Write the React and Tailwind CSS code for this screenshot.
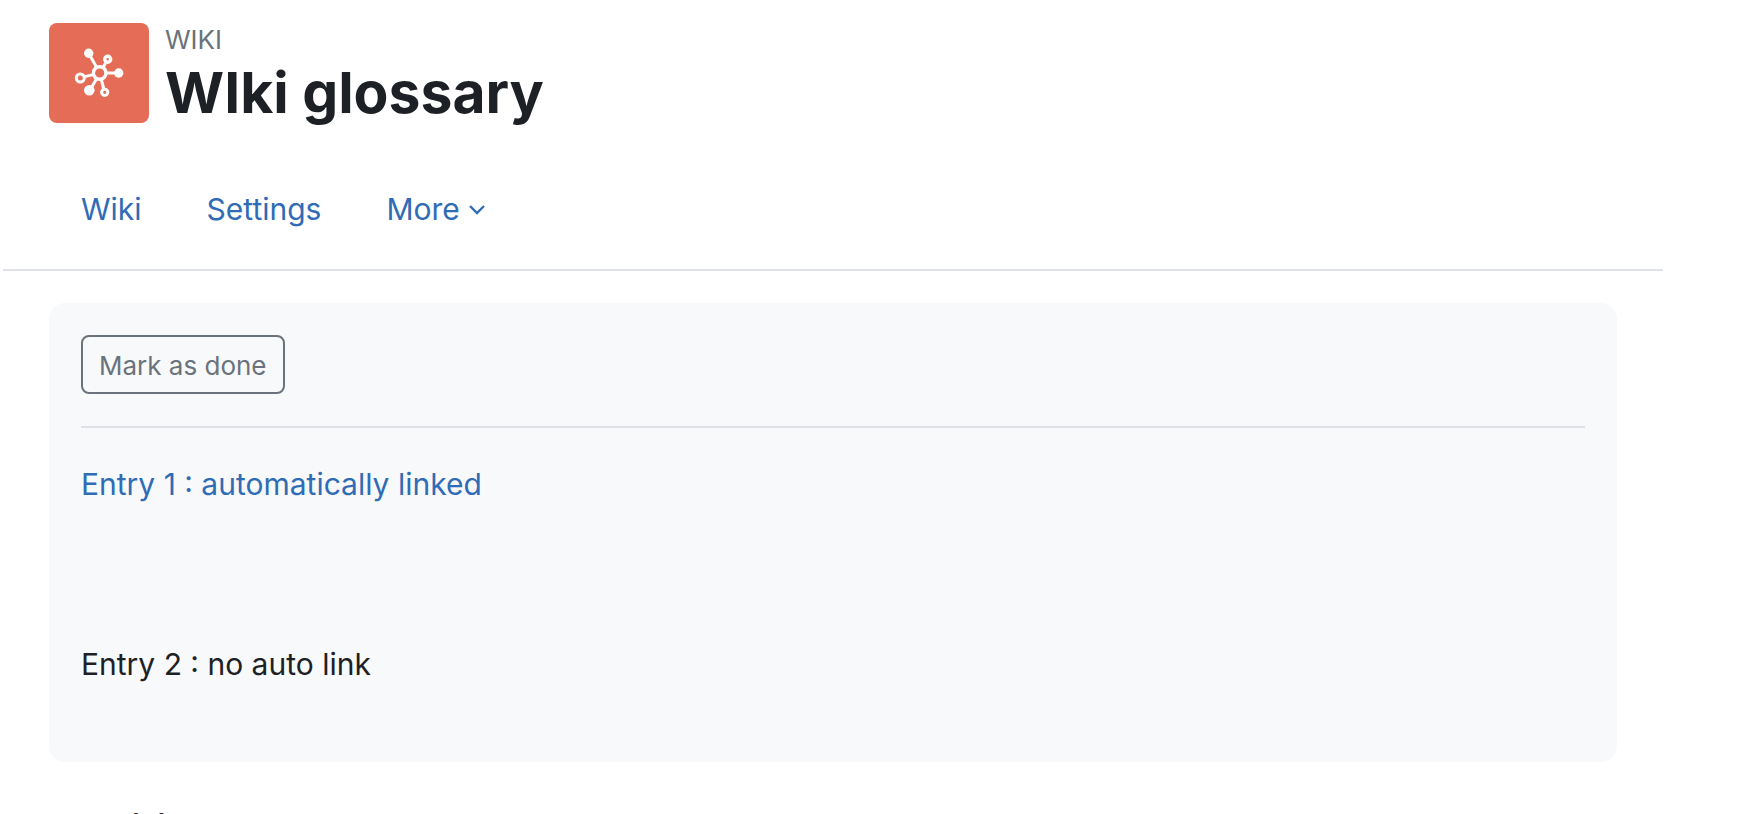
import React, { useState } from "react";

const navLink = "text-[#306cb5] hover:underline";

const WikiIcon = () => (
  <svg viewBox="0 0 50 50" className="size-[50px]" fill="none" stroke="#fff" strokeWidth="3" aria-hidden="true">
    <path d="M22.4 19 14.7 5.3M29 19.5l2.6-4.5M32 25h12M19 26.6l-8 2M22.5 31l-6 10M27.3 31.5l2.4 9" />
    <circle cx="25.7" cy="25" r="6.3" strokeWidth="3.4" />
    <circle cx="33.7" cy="11.3" r="3" strokeWidth="3.4" />
    <circle cx="6.3" cy="30" r="4" />
    <circle cx="30.7" cy="44.3" r="3.1" />
    <g fill="#fff" stroke="none">
      <circle cx="14.7" cy="5.3" r="4.7" />
      <circle cx="44.7" cy="25" r="4.7" />
      <circle cx="15.3" cy="42.3" r="5.3" />
    </g>
  </svg>
);

const App = () => {
  const [done, setDone] = useState(false);

  return (
    <div className="h-screen overflow-hidden bg-white font-['Inter',sans-serif] text-[30px] leading-[45px] text-[#1d2125]">
      {/* Activity header */}
      <header className="flex gap-4 pt-[23px] pl-[49px]">
        <div className="flex size-[100px] shrink-0 items-center justify-center rounded-lg bg-[#e56d57]">
          <WikiIcon />
        </div>
        <div>
          <p className="text-[26px] leading-[34px] text-[#6a737b]">WIKI</p>
          <h1 className="text-[57px] leading-[72px] font-bold">WIki glossary</h1>
        </div>
      </header>

      {/* Secondary navigation */}
      <nav className="mt-[34px] mr-[89px] ml-[3px] flex h-[108px] items-start gap-[65px] border-b-2 border-[#dee2e6] pt-[24px] pl-[78px]">
        <a href="#wiki" className={navLink}>Wiki</a>
        <a href="#settings" className={navLink}>Settings</a>
        <button type="button" className="flex items-center gap-2 text-[#306cb5]">
          More
          <svg viewBox="0 0 18 12" className="h-3 w-[18px]" fill="none" stroke="currentColor" strokeWidth="2.4" aria-hidden="true">
            <path d="m2 2 7 7 7-7" />
          </svg>
        </button>
      </nav>

      <main className="mt-8 mr-[135px] ml-[49px]">
        <section className="rounded-2xl bg-[#f8f9fb] p-8 pb-[75px]">
          <button
            type="button"
            onClick={() => setDone(!done)}
            className="block rounded-lg border-2 border-[#6a737b] px-4 pt-[6px] pb-1 text-[26px] leading-[45px] text-[#6a737b]"
          >
            {done ? "Done" : "Mark as done"}
          </button>
          <hr className="mt-8 mb-[34px] border-t-2 border-[#dee2e6]" />
          <p>
            <a href="#entry-1" className={navLink}>Entry 1 : automatically linked</a>
          </p>
          <p className="mt-[135px]">Entry 2 : no auto link</p>
        </section>
        <h2 className="mt-11 pl-8 text-[40px] leading-[48px] font-bold">Editing</h2>
      </main>
    </div>
  );
};

export default App;
